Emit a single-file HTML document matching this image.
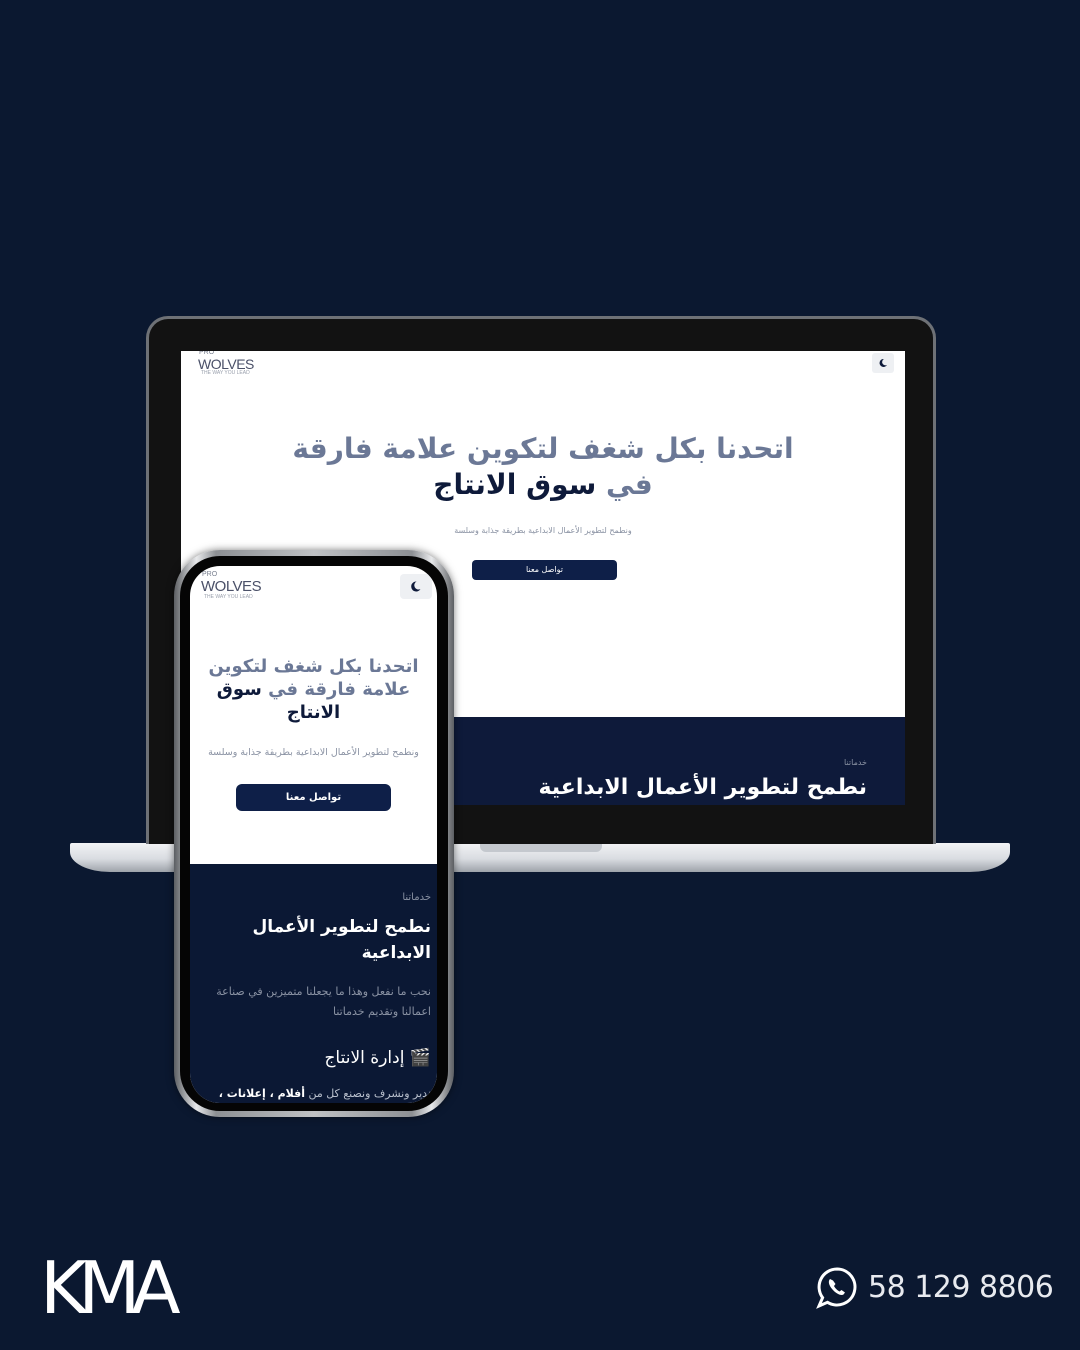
<!DOCTYPE html>
<html><head><meta charset="utf-8">
<style>
*{margin:0;padding:0;box-sizing:border-box}
body{width:1080px;height:1350px;background:#0b1830;position:relative;overflow:hidden;font-family:"Liberation Sans","Noto Sans CJK SC",sans-serif}
.abs{position:absolute}
.ar{font-family:"DejaVu Sans","Noto Sans CJK SC",sans-serif;direction:rtl}
</style></head><body>

<!-- laptop base -->
<div class="abs" style="left:70px;top:843px;width:940px;height:29px;background:linear-gradient(#f2f3f5,#d9dce1 55%,#9ea3aa);border-radius:2px 2px 40px 40px/2px 2px 20px 20px"></div>
<div class="abs" style="left:480px;top:843px;width:122px;height:9px;background:#c4c8ce;border-radius:0 0 6px 6px"></div>
<!-- laptop bezel -->
<div class="abs" style="left:146px;top:316px;width:790px;height:528px;background:#121212;border-radius:22px 22px 0 0;border:3px solid #6e7176;border-bottom:none"></div>
<!-- laptop screen -->
<div class="abs" style="left:181px;top:351px;width:724px;height:454px;background:#fff;overflow:hidden">
  <div class="abs" style="left:18px;top:-2px;font-size:7px;color:#7a8090">PRO</div>
  <div class="abs" style="left:17px;top:5px;font-size:14px;color:#4a5068;letter-spacing:-0.5px">WOLVES</div>
  <div class="abs" style="left:20px;top:19px;font-size:5px;color:#9aa0ad">THE WAY YOU LEAD</div>
  <div class="abs" style="left:691px;top:2px;width:22px;height:20px;background:#eef0f3;border-radius:3px">
    <svg width="22" height="20" viewBox="0 0 22 20"><path d="M12 6a4 4 0 1 0 3 6a3.2 3.2 0 0 1-3-6z" fill="#0e1a3a"/></svg></div>
  <div class="abs ar" style="left:0;width:724px;top:80px;text-align:center;font-size:28px;font-weight:bold;color:#6b7896;line-height:36px">اتحدنا بكل شغف لتكوين علامة فارقة<br>في <span style="color:#0e1a3a">سوق الانتاج</span></div>
  <div class="abs ar" style="left:0;width:724px;top:175px;text-align:center;font-size:8px;color:#8a92a3">ونطمح لتطوير الأعمال الابداعية بطريقة جذابة وسلسة</div>
  <div class="abs ar" style="left:291px;top:209px;width:145px;height:20px;background:#0e1f48;border-radius:4px;color:#fff;font-size:8px;text-align:center;line-height:20px">تواصل معنا</div>
  <div class="abs" style="left:0;top:366px;width:724px;height:90px;background:#0e1a3a"></div>
  <div class="abs ar" style="right:38px;top:407px;font-size:8px;color:#8a92a3">خدماتنا</div>
  <div class="abs ar" style="right:38px;top:424px;font-size:22px;font-weight:bold;color:#fff">نطمح لتطوير الأعمال الابداعية</div>
</div>

<!-- phone -->
<div class="abs" style="left:174px;top:550px;width:280px;height:567px;border-radius:46px;background:linear-gradient(90deg,#5c5f63,#e8e9eb 8%,#8d9094 15%,#bfc1c4 50%,#8d9094 85%,#e8e9eb 92%,#5c5f63);box-shadow:0 0 8px rgba(0,0,0,.5)"></div>
<div class="abs" style="left:180px;top:556px;width:268px;height:555px;border-radius:40px;background:#050505"></div>
<div class="abs" style="left:190px;top:566px;width:247px;height:537px;border-radius:30px;background:#fff;overflow:hidden">
  <div class="abs" style="left:12px;top:5px;font-size:7px;color:#7a8090">PRO</div>
  <div class="abs" style="left:11px;top:12px;font-size:15px;color:#4a5068;letter-spacing:-0.5px">WOLVES</div>
  <div class="abs" style="left:14px;top:28px;font-size:5px;color:#9aa0ad">THE WAY YOU LEAD</div>
  <div class="abs" style="left:210px;top:8px;width:32px;height:25px;background:#eef0f3;border-radius:4px">
    <svg width="32" height="25" viewBox="0 0 32 25"><path d="M16.5 7.5a5 5 0 1 0 4 7.5a4 4 0 0 1-4-7.5z" fill="#0e1a3a"/></svg></div>
  <div class="abs ar" style="left:10px;width:227px;top:89px;text-align:center;font-size:18px;font-weight:bold;color:#6b7896;line-height:23px">اتحدنا بكل شغف لتكوين علامة فارقة في <span style="color:#0e1a3a">سوق الانتاج</span></div>
  <div class="abs ar" style="left:0;width:247px;top:181px;text-align:center;font-size:9.5px;color:#8a92a3;white-space:nowrap">ونطمح لتطوير الأعمال الابداعية بطريقة جذابة وسلسة</div>
  <div class="abs ar" style="left:46px;top:218px;width:155px;height:27px;background:#0e1f48;border-radius:6px;color:#fff;font-size:10px;font-weight:bold;text-align:center;line-height:27px">تواصل معنا</div>
  <div class="abs" style="left:0;top:298px;width:247px;height:240px;background:#0b1834"></div>
  <div class="abs ar" style="right:6px;top:326px;font-size:10px;color:#8a92a3">خدماتنا</div>
  <div class="abs ar" style="right:6px;top:348px;width:220px;font-size:17px;font-weight:bold;color:#fff;line-height:26px">نطمح لتطوير الأعمال الابداعية</div>
  <div class="abs ar" style="right:6px;top:416px;width:230px;font-size:11px;color:#8a92a3;line-height:20px">نحب ما نفعل وهذا ما يجعلنا متميزين في صناعة اعمالنا وتقديم خدماتنا</div>
  <div class="abs ar" style="right:6px;top:482px;font-size:17px;color:#fff">🎬 إدارة الانتاج</div>
  <div class="abs ar" style="right:6px;top:521px;font-size:11px;color:#b8bfcc;white-space:nowrap">ندير ونشرف ونصنع كل من <b style="color:#fff">أفلام ، إعلانات ،</b></div>
</div>

<!-- footer -->
<div class="abs" style="left:40px;top:1252px;font-size:72px;color:#fff;letter-spacing:-9px;line-height:72px;font-family:'DejaVu Sans',sans-serif;font-weight:normal;-webkit-text-stroke:0">KMA</div>
<svg class="abs" style="left:816px;top:1266px" width="42" height="44" viewBox="0 0 42 44">
  <path d="M21 3a18 18 0 1 1-9.5 33.3L3 40l3.6-8.3A18 18 0 0 1 21 3z" fill="none" stroke="#fff" stroke-width="3"/>
  <path d="M14 13c-2 2-1.5 6 2.5 10.5S25 30 27.5 28.5l1.5-2-3.5-2.5-2 1.5c-2-1-4.5-3.5-5.5-5.5l1.5-2-2.5-3.5z" fill="#fff"/>
</svg>
<div class="abs" style="left:868px;top:1270px;font-size:30px;letter-spacing:-0.5px;color:#e8eaef;font-family:'DejaVu Sans',sans-serif;white-space:nowrap">58 129 8806</div>
</body></html>
